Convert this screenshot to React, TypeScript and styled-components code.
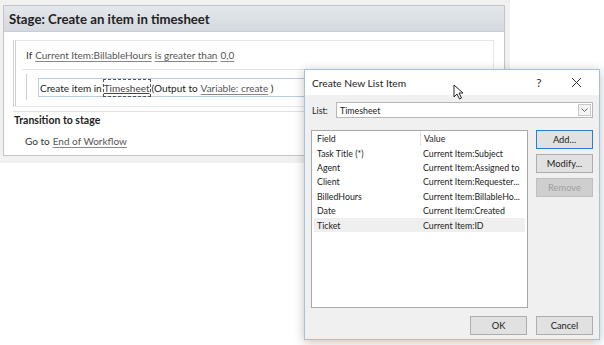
import styled, { createGlobalStyle } from 'styled-components';

const GlobalStyle = createGlobalStyle`
  body {
    margin: 0;
    background: #fff;
    font-family: Lato, 'Open Sans', sans-serif;
    color: #222;
  }
`;

const Page = styled.div`
  position: relative;
  width: 604px;
  height: 345px;
  overflow: hidden;
`;

const Backdrop = styled.div`
  width: 510px;
  height: 163px;
  background: #f1f1f1;
  padding: 5px 5px 0 3px;
  box-sizing: border-box;
`;

const Panel = styled.div`
  height: 151px;
  background: #fff;
  border: 1px solid #c4c4c4;
  box-sizing: border-box;
`;

const PanelHeader = styled.div`
  height: 25px;
  display: flex;
  align-items: center;
  padding-left: 5px;
  background: linear-gradient(#e4e8ec, #d4d9df);
  border-bottom: 1px solid #c9ced4;
  font-size: 13.2px;
  font-weight: 700;
`;

const PanelBody = styled.div`
  padding: 8px 10px 0 9px;
`;

const Condition = styled.div`
  border: 1px solid #e6e6e6;
  border-left: 3px double #cfcfcf;
  height: 67px;
  box-sizing: border-box;
`;

const CondRow = styled.div`
  height: 28px;
  display: flex;
  align-items: center;
  font-size: 10px;
  color: #333;
  border-bottom: 1px solid #e2e2e2;
  margin-left: 6px;
  padding-left: 4px;
`;

const Link = styled.span`
  color: #555;
  text-decoration: underline;
  text-decoration-color: #888;
  text-underline-offset: 2px;
  margin-left: 3px;
`;

const ActionArea = styled.div`
  display: flex;
  align-items: flex-start;
  padding: 4px 0 0 10px;
`;

const ActionRail = styled.div`
  width: 1px;
  height: 26px;
  background: #cfcfcf;
  margin-right: 11px;
`;

const ActionBox = styled.div`
  margin-top: 4px;
  flex: 1;
  height: 19px;
  display: flex;
  align-items: center;
  padding-left: 1px;
  border: 1px solid #b9cde0;
  box-sizing: border-box;
  font-size: 10px;
  color: #222;
  white-space: nowrap;
`;

const Focused = styled.span`
  border: 1px dashed #555;
  padding: 2px 0;
  text-decoration: underline;
  color: #444;
  margin: 0 1px;
`;

const Divider = styled.div`
  height: 1px;
  background: #e0e0e0;
  margin: 4px -10px 0 0;
`;

const SectionTitle = styled.div`
  font-size: 10.5px;
  font-weight: 700;
  padding: 2px 0 0 1px;
  height: 16px;
`;

const GoTo = styled.div`
  font-size: 10px;
  color: #333;
  padding: 5px 0 0 12px;
`;

const Dialog = styled.div`
  position: absolute;
  left: 304px;
  top: 69px;
  width: 296px;
  height: 271px;
  border: 1px solid #a3c2dc;
  box-sizing: border-box;
  background: #f0f0f0;
  box-shadow: 0 2px 10px rgba(0, 0, 0, 0.25);
  display: flex;
  flex-direction: column;
`;

const TitleBar = styled.div`
  height: 25px;
  background: #fff;
  display: flex;
  align-items: center;
  padding-left: 7px;
  font-size: 10.2px;
  color: #222;
`;

const TitleText = styled.div`
  flex: 1;
`;

const TitleIcon = styled.div<{ w: number }>`
  width: ${({ w }) => w}px;
  text-align: center;
  font-size: 12px;
  color: #333;
  display: flex;
  justify-content: center;
`;

const DialogBody = styled.div`
  flex: 1;
  display: flex;
  flex-direction: column;
  padding: 7px 6px 0 6px;
  font-size: 8.8px;
`;

const ListRow = styled.div`
  display: flex;
  align-items: center;
  height: 16px;
`;

const ListLabel = styled.div`
  width: 24px;
  padding-left: 1px;
`;

const Select = styled.div`
  flex: 1;
  height: 16px;
  background: #fff;
  border: 1px solid #b7b7b7;
  box-sizing: border-box;
  display: flex;
  align-items: center;
  padding-left: 3px;
`;

const SelectArrow = styled.div`
  margin-left: auto;
  width: 13px;
  height: 12px;
  margin-right: 1px;
  border: 1px solid #c8c8c8;
  background: #f4f4f4;
  box-sizing: border-box;
  display: flex;
  align-items: center;
  justify-content: center;
`;

const Main = styled.div`
  display: flex;
  gap: 8px;
  margin-top: 12px;
`;

const ListBox = styled.div`
  width: 218px;
  height: 178px;
  background: #fff;
  border: 1px solid #a8a8a8;
  box-sizing: border-box;
  padding: 0 2px;
`;

const Row = styled.div<{ selected?: boolean }>`
  display: grid;
  grid-template-columns: 106px 1fr;
  height: 14.4px;
  align-items: center;
  background: ${({ selected }) => (selected ? '#efefef' : 'transparent')};
  white-space: nowrap;
`;

const HeadRow = styled(Row)`
  height: 15px;
`;

const Cell = styled.div<{ head?: boolean }>`
  padding-left: 3px;
  overflow: hidden;
  ${({ head }) => head && 'border-left: 1px solid #e4e4e4; height: 15px; display: flex; align-items: center;'}
`;

const Buttons = styled.div`
  display: flex;
  flex-direction: column;
  gap: 5px;
`;

const Button = styled.div<{ primary?: boolean; disabled?: boolean }>`
  width: 57px;
  height: 19px;
  box-sizing: border-box;
  background: #e1e1e1;
  border: 1px solid ${({ primary }) => (primary ? '#2b7fd0' : '#adadad')};
  display: flex;
  align-items: center;
  justify-content: center;
  font-size: 9.3px;
  color: #222;
  ${({ disabled }) => disabled && 'border-color: #bfbfbf; background: #cfcfcf; color: #a0a0a0;'}
`;

const Footer = styled.div`
  display: flex;
  justify-content: flex-end;
  gap: 9px;
  margin-top: 8px;
`;

const Cursor = styled.svg`
  position: absolute;
  left: 453px;
  top: 84px;
`;

const rows = [
  ['Task Title (*)', 'Current Item:Subject'],
  ['Agent', 'Current Item:Assigned to'],
  ['Client', 'Current Item:Requester...'],
  ['BilledHours', 'Current Item:BillableHo...'],
  ['Date', 'Current Item:Created'],
  ['Ticket', 'Current Item:ID'],
];

export default function App() {
  return (
    <>
      <GlobalStyle />
      <Page>
        <Backdrop>
          <Panel>
            <PanelHeader>Stage: Create an item in timesheet</PanelHeader>
            <PanelBody>
              <Condition>
                <CondRow>
                  If<Link>Current Item:BillableHours</Link>
                  <Link>is greater than</Link>
                  <Link>0,0</Link>
                </CondRow>
                <ActionArea>
                  <ActionRail />
                  <ActionBox>
                    Create item in<Focused>Timesheet</Focused>(Output to
                    <Link>Variable: create</Link>&nbsp;)
                  </ActionBox>
                </ActionArea>
              </Condition>
              <Divider />
              <SectionTitle>Transition to stage</SectionTitle>
              <GoTo>
                Go to<Link>End of Workflow</Link>
              </GoTo>
            </PanelBody>
          </Panel>
        </Backdrop>

        <Dialog>
          <TitleBar>
            <TitleText>Create New List Item</TitleText>
            <TitleIcon w={28}>?</TitleIcon>
            <TitleIcon w={46}>
              <svg width="11" height="11" viewBox="0 0 11 11">
                <path d="M1 1 L10 10 M10 1 L1 10" stroke="#333" strokeWidth="1" />
              </svg>
            </TitleIcon>
          </TitleBar>
          <DialogBody>
            <ListRow>
              <ListLabel>List:</ListLabel>
              <Select>
                Timesheet
                <SelectArrow>
                  <svg width="7" height="4" viewBox="0 0 7 4">
                    <path d="M0.5 0.5 L3.5 3.5 L6.5 0.5" stroke="#666" fill="none" strokeWidth="1" />
                  </svg>
                </SelectArrow>
              </Select>
            </ListRow>
            <Main>
              <ListBox>
                <HeadRow>
                  <Cell>Field</Cell>
                  <Cell head>Value</Cell>
                </HeadRow>
                {rows.map(([f, v]) => (
                  <Row key={f} selected={f === 'Ticket'}>
                    <Cell>{f}</Cell>
                    <Cell>{v}</Cell>
                  </Row>
                ))}
              </ListBox>
              <Buttons>
                <Button primary>Add...</Button>
                <Button>Modify...</Button>
                <Button disabled>Remove</Button>
              </Buttons>
            </Main>
            <Footer>
              <Button>OK</Button>
              <Button>Cancel</Button>
            </Footer>
          </DialogBody>
        </Dialog>

        <Cursor width="12" height="16" viewBox="0 0 12 16">
          <path
            d="M1 1 L1 13 L4 10 L6.5 15 L8.5 14 L6 9 L10 9 Z"
            fill="#fff"
            stroke="#222"
            strokeWidth="1"
            strokeLinejoin="round"
          />
        </Cursor>
      </Page>
    </>
  );
}
